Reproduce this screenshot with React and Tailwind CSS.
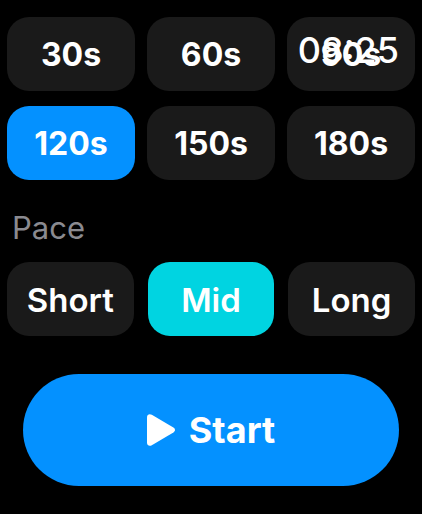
import React, { useState } from "react";

const DURATIONS = [30, 60, 90, 120, 150, 180];
const PACES = ["Short", "Mid", "Long"];

function OptionButton({ label, selected, selectedClass, textClass, onClick }) {
  return (
    <button
      type="button"
      aria-pressed={selected}
      onClick={onClick}
      className={`flex h-[74px] items-center justify-center rounded-[22px] pt-[2px] ${textClass} ${
        selected ? selectedClass : "bg-[#1a1a1a]"
      }`}
    >
      {label}
    </button>
  );
}

function PlayIcon() {
  return (
    <svg width="28" height="32" viewBox="0 0 28 32" aria-hidden="true">
      <path
        d="M0 3.2C0 0.6 2.4-0.6 4.8 0.8L26.4 13.6C28.5 14.9 28.5 17.1 26.4 18.4L4.8 31.2C2.4 32.6 0 31.4 0 28.8Z"
        fill="currentColor"
      />
    </svg>
  );
}

export default function App() {
  const [duration, setDuration] = useState(120);
  const [pace, setPace] = useState("Mid");

  return (
    <main className="relative min-h-screen bg-black px-[7px] pt-[17px] pb-7 font-['Inter',sans-serif] text-white">
      {/* System clock floats over the scrolled content */}
      <time className="pointer-events-none absolute top-[30px] right-[23px] text-[36px] leading-10 font-medium">
        08:25
      </time>

      <section aria-label="Duration" className="grid grid-cols-3 gap-x-3 gap-y-[15px]">
        {DURATIONS.map((seconds) => (
          <OptionButton
            key={seconds}
            label={`${seconds}s`}
            selected={duration === seconds}
            selectedClass="bg-[#0491ff]"
            textClass="text-[32px] leading-10 font-bold"
            onClick={() => setDuration(seconds)}
          />
        ))}
      </section>

      <section aria-labelledby="pace-title" className="pt-7">
        <h2 id="pace-title" className="px-[5px] text-[31px] leading-10 text-[#8a8a90]">
          Pace
        </h2>
        <div className="grid grid-cols-3 gap-x-[14px] pt-[14px]">
          {PACES.map((name) => (
            <OptionButton
              key={name}
              label={name}
              selected={pace === name}
              selectedClass="bg-[#00d4e1]"
              textClass="text-[33px] leading-10 font-semibold"
              onClick={() => setPace(name)}
            />
          ))}
        </div>
      </section>

      <div className="px-4 pt-[38px]">
        <button
          type="button"
          className="flex h-28 w-full items-center justify-center gap-[14px] rounded-full bg-[#0491ff] text-[36px] leading-10 font-bold"
        >
          <PlayIcon />
          Start
        </button>
      </div>
    </main>
  );
}
